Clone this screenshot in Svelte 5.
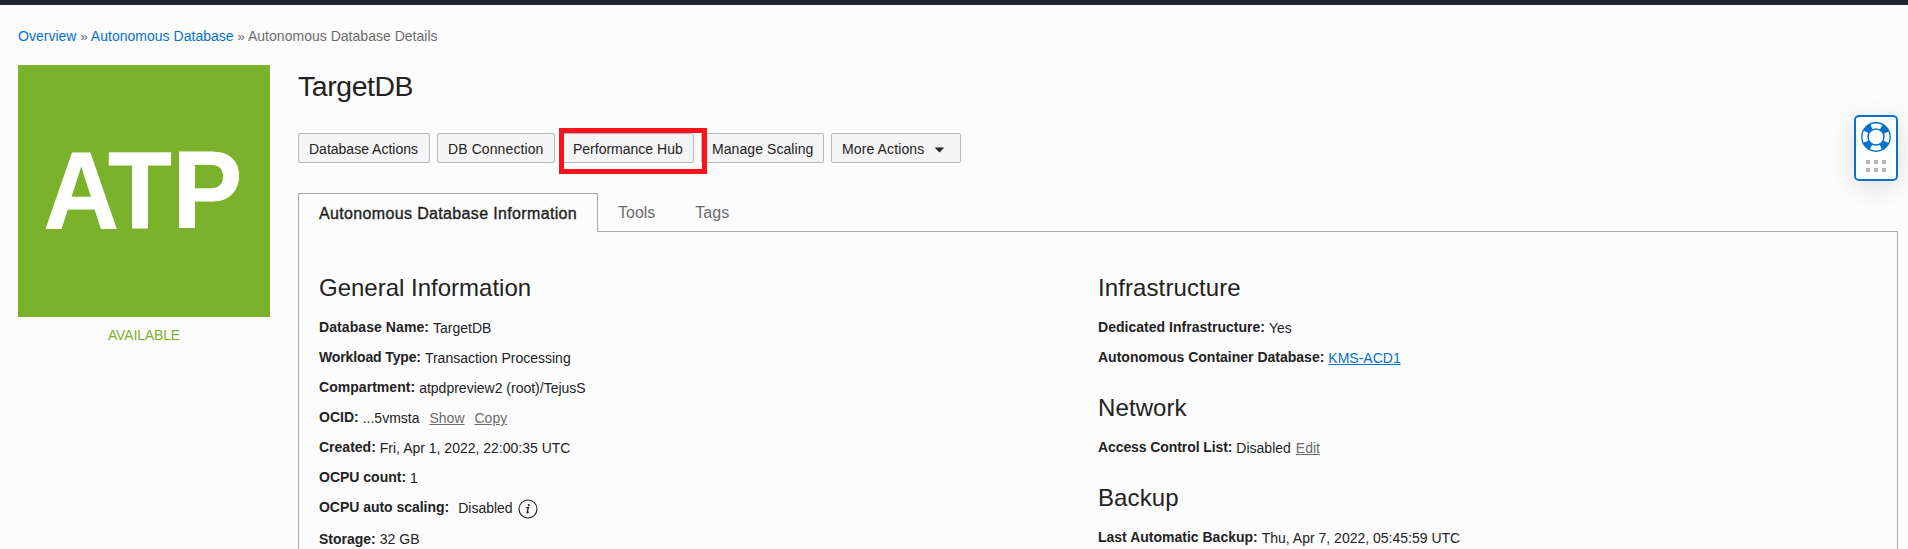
<script>
  const actions = [
    { label: 'Database Actions', width: 132 },
    { label: 'DB Connection', width: 118, tracking: 0.1 },
    { label: 'Performance Hub', width: 132, marked: true },
    { label: 'Manage Scaling', width: 123, tracking: 0.07 },
    { label: 'More Actions', width: 130, menu: true, tracking: 0.12 }
  ];
  const general = [
    { label: 'Database Name:', value: 'TargetDB', tracking: 0.08 },
    { label: 'Workload Type:', value: 'Transaction Processing', tracking: -0.13 },
    { label: 'Compartment:', value: 'atpdpreview2 (root)/TejusS', tracking: 0.04 },
    { label: 'OCID:', value: '...5vmsta', links: ['Show', 'Copy'] },
    { label: 'Created:', value: 'Fri, Apr 1, 2022, 22:00:35 UTC' },
    { label: 'OCPU count:', value: '1' },
    { label: 'OCPU auto scaling:', value: 'Disabled', info: true, tracking: -0.03 },
    { label: 'Storage:', value: '32 GB', last: true }
  ];
  const sections = [
    {
      title: 'Infrastructure',
      rows: [
        { label: 'Dedicated Infrastructure:', value: 'Yes', tracking: 0.02 },
        { label: 'Autonomous Container Database:', href: 'KMS-ACD1' }
      ]
    },
    { title: 'Network', rows: [{ label: 'Access Control List:', value: 'Disabled', edit: 'Edit', tracking: -0.09 }] },
    { title: 'Backup', rows: [{ label: 'Last Automatic Backup:', value: 'Thu, Apr 7, 2022, 05:45:59 UTC' }] }
  ];
</script>

<div class="page">
  <header class="topbar"></header>
  <nav class="crumbs">
    <a href="#overview">Overview</a> <span class="sep">»</span>
    <a href="#adb">Autonomous Database</a> <span class="sep">»</span>
    <span>Autonomous Database Details</span>
  </nav>

  <div class="body">
    <aside>
      <svg class="tile" viewBox="0 0 252 252" width="252" height="252">
        <rect width="252" height="252" fill="#7bb22b" />
        <text transform="translate(0 163) scale(.95 1)" x="26.8 94.7 162.6" y="0">ATP</text>
      </svg>
      <div class="status">AVAILABLE</div>
    </aside>

    <main>
      <h1>TargetDB</h1>
      <div class="actions">
        {#each actions as a}
          <div class="slot">
            <button style="width:{a.width}px; letter-spacing:{a.tracking ?? 0}px">
              {a.label}
              {#if a.menu}
                <svg class="caret" width="11" height="6" viewBox="0 0 11 6"><path d="M.7.4h9.6L5.5 5.4z" fill="#222" /></svg>
              {/if}
            </button>
            {#if a.marked}<div class="marker"></div>{/if}
          </div>
        {/each}
      </div>

      <div class="tabs">
        <div class="tab active">Autonomous Database Information</div>
        <div class="tab">Tools</div>
        <div class="tab">Tags</div>
      </div>

      <div class="panel">
        <section class="col left">
          <h2>General Information</h2>
          {#each general as r}
            <div class="row" class:last={r.last}>
              <b style="letter-spacing:{r.tracking ?? 0}px">{r.label}</b>
              <span class="value" class:wide={r.info}>{r.value}</span>
              {#if r.links}
                {#each r.links as l}<a class="muted" href="#ocid">{l}</a>{/each}
              {/if}
              {#if r.info}
                <svg class="info" width="20" height="20" viewBox="0 0 20 20">
                  <circle cx="10" cy="10" r="9" fill="none" stroke="#222" stroke-width="1.1" />
                  <circle cx="10.8" cy="6" r="1.1" fill="#222" />
                  <path d="M8.2 8.9l2.2-.5-1.3 4.9c-.2.8.5.7 1.6-.5" fill="none" stroke="#222" stroke-width="1.3" />
                </svg>
              {/if}
            </div>
          {/each}
        </section>

        <section class="col">
          {#each sections as s}
            <div class="group">
              <h2 class="spaced">{s.title}</h2>
              {#each s.rows as r}
                <div class="row">
                  <b style="letter-spacing:{r.tracking ?? 0}px">{r.label}</b>
                  {#if r.href}<a class="value link" href="#acd">{r.href}</a>{:else}<span class="value">{r.value}</span>{/if}
                  {#if r.edit}<a class="muted edit" href="#acl">{r.edit}</a>{/if}
                </div>
              {/each}
            </div>
          {/each}
        </section>
      </div>
    </main>
  </div>

  <div class="help">
    <svg width="30" height="30" viewBox="0 0 30 30">
      <circle cx="15" cy="15" r="11" fill="none" stroke="#0572ce" stroke-width="7" stroke-dasharray="7.4 9.88" stroke-dashoffset="-4.94" />
      <circle cx="15" cy="15" r="14.2" fill="none" stroke="#0572ce" stroke-width="1.4" />
      <circle cx="15" cy="15" r="8" fill="#fff" stroke="#0572ce" stroke-width="1.5" />
    </svg>
    <div class="dots">
      {#each Array(6) as _}<i></i>{/each}
    </div>
  </div>
</div>

<style>
  :global(body) { background: #fcfcfc; overflow: hidden; }
  .page {
    position: relative;
    width: 1908px;
    height: 549px;
    overflow: hidden;
    background: #fcfcfc;
    color: #222;
    font: 14px/20px "Liberation Sans", Arial, sans-serif;
  }
  .topbar { height: 5px; background: #1e2833; }
  a { color: #0572ce; text-decoration: none; }
  .crumbs { padding: 21px 18px 0; height: 39px; color: #6b6b6b; white-space: nowrap; letter-spacing: .02px; }
  .sep { font-size: 13px; }
  .body { display: flex; gap: 28px; padding: 0 10px 0 18px; }
  aside { width: 252px; flex: none; }
  .tile { display: block; }
  .tile text {
    font: bold 110px "Liberation Sans", Arial, sans-serif;
    fill: #fff;
    stroke: #fff;
    stroke-width: .8;
    font-kerning: none;
  }
  .status { margin-top: 8px; text-align: center; color: #7bb22b; letter-spacing: -.15px; }
  main { flex: 1; min-width: 0; }
  h1 { margin: 4px 0 0; font-size: 28.4px; line-height: 34px; font-weight: 400; letter-spacing: -.4px; }
  .actions { display: flex; gap: 7px; margin-top: 30px; }
  .slot { position: relative; }
  button {
    display: flex;
    align-items: center;
    height: 30px;
    padding: 1px 0 0 10px;
    border: 1px solid #b4b8c2;
    border-radius: 2px;
    background: #f5f5f5;
    color: #222;
    font: inherit;
    white-space: nowrap;
  }
  .caret { margin: 2px 0 0 10px; }
  .marker {
    position: absolute;
    box-sizing: border-box;
    left: -3px;
    top: -5px;
    width: 148px;
    height: 46px;
    border: 5px solid #fd1219;
    z-index: 1;
  }
  .tabs { display: flex; margin-top: 30px; height: 39px; box-shadow: inset 0 -1px #aaa; }
  .tab {
    padding: 9px 20px 0;
    font-size: 16px;
    line-height: 22px;
    color: #6b6b6b;
    white-space: nowrap;
  }
  .active {
    box-sizing: border-box;
    width: 300px;
    border: 1px solid #aaa;
    border-bottom: 0;
    background: #fcfcfc;
    color: #222;
    letter-spacing: .35px;
    -webkit-text-stroke: .35px #222;
  }
  .panel {
    display: flex;
    height: 400px;
    padding: 41px 20px 0;
    border: 1px solid #aaa;
    border-top: 0;
  }
  .left { width: 779px; flex: none; }
  h2 { margin: 0; height: 44px; font-size: 24px; line-height: 30px; font-weight: 400; }
  .spaced { letter-spacing: .1px; }
  .row { display: flex; height: 30px; white-space: nowrap; }
  .value { margin: 1px 0 0 4px; }
  .wide { margin-left: 9px; }
  .muted { margin: 1px 0 0 10px; color: #6b6b6b; text-decoration: underline; }
  .edit { margin-left: 5px; }
  .link { text-decoration: underline; }
  .info { margin: 2px 0 0 5px; }
  .last { padding-top: 2px; }
  .last .value { margin-top: 0; }
  .group { padding-bottom: 16px; }
  .help {
    position: absolute;
    box-sizing: border-box;
    left: 1854px;
    top: 115px;
    width: 44px;
    height: 66px;
    padding-top: 5px;
    display: flex;
    flex-direction: column;
    align-items: center;
    border: 2px solid #0572ce;
    border-radius: 5px;
    background: #fff;
    box-shadow: 0 6px 24px rgba(0, 0, 0, .12);
  }
  .dots { display: grid; grid-template-columns: repeat(3, 4px); gap: 4px; margin-top: 8px; }
  .dots i { width: 4px; height: 4px; background: #b6b6c0; }
</style>
